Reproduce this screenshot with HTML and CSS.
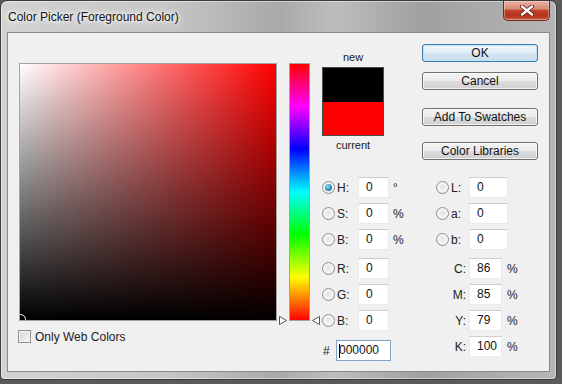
FILE: index.html
```html
<!DOCTYPE html>
<html>
<head>
<meta charset="utf-8">
<link rel="stylesheet" href="styles.css">
</head>
<body>
<div class="window">
  <div class="titlebar">
    <span class="title">Color Picker (Foreground Color)</span>
    <div class="close">
      <svg width="14" height="11" viewBox="0 0 14 11">
        <path d="M2 1.5 L12 9.5 M12 1.5 L2 9.5" stroke="#5a1d12" stroke-width="4" stroke-linecap="round"/>
        <path d="M2 1.5 L12 9.5 M12 1.5 L2 9.5" stroke="#fff" stroke-width="2.4" stroke-linecap="round"/>
      </svg>
    </div>
  </div>
  <div class="client">
    <div class="left">
      <div class="field"><div class="marker"></div></div>
      <div class="webcolors"><span class="checkbox"></span><span>Only Web Colors</span></div>
    </div>
    <div class="slider-col">
      <div class="slider"></div>
      <svg class="tri tri-l" width="9" height="9" viewBox="0 0 9 9"><polygon points="0.5,0.5 7.5,4.5 0.5,8.5" fill="#fff" stroke="#555"/></svg>
      <svg class="tri tri-r" width="9" height="9" viewBox="0 0 9 9"><polygon points="8.5,0.5 1.5,4.5 8.5,8.5" fill="#fff" stroke="#555"/></svg>
    </div>
    <div class="right">
      <div class="top">
        <div class="swatch-col">
          <div class="cap">new</div>
          <div class="swatch"><div class="sw-new"></div><div class="sw-cur"></div></div>
          <div class="cap cap-cur">current</div>
        </div>
        <div class="buttons">
          <div class="btn default">OK</div>
          <div class="btn b-cancel">Cancel</div>
          <div class="btn b-add">Add To Swatches</div>
          <div class="btn b-lib">Color Libraries</div>
        </div>
      </div>
      <div class="fields">
        <div class="colA">
          <div class="group">
            <div class="row"><span class="radio on"></span><span class="lbl">H:</span><span class="inp w31">0</span><span class="unit">°</span></div>
            <div class="row"><span class="radio"></span><span class="lbl">S:</span><span class="inp w31">0</span><span class="unit">%</span></div>
            <div class="row"><span class="radio"></span><span class="lbl">B:</span><span class="inp w31">0</span><span class="unit">%</span></div>
          </div>
          <div class="group g2">
            <div class="row"><span class="radio"></span><span class="lbl">R:</span><span class="inp w31">0</span></div>
            <div class="row"><span class="radio"></span><span class="lbl">G:</span><span class="inp w31">0</span></div>
            <div class="row"><span class="radio"></span><span class="lbl">B:</span><span class="inp w31">0</span></div>
          </div>
          <div class="row hexrow"><span class="hash">#</span><span class="inp hex"><span class="caret"></span>000000</span></div>
        </div>
        <div class="colB">
          <div class="group">
            <div class="row"><span class="radio"></span><span class="lbl lblb">L:</span><span class="inp w39">0</span></div>
            <div class="row"><span class="radio"></span><span class="lbl lblb">a:</span><span class="inp w39">0</span></div>
            <div class="row"><span class="radio"></span><span class="lbl lblb">b:</span><span class="inp w39">0</span></div>
          </div>
          <div class="group g2">
            <div class="row"><span class="clbl">C:</span><span class="inp w33">86</span><span class="unit u2">%</span></div>
            <div class="row"><span class="clbl">M:</span><span class="inp w33">85</span><span class="unit u2">%</span></div>
            <div class="row"><span class="clbl">Y:</span><span class="inp w33">79</span><span class="unit u2">%</span></div>
            <div class="row"><span class="clbl">K:</span><span class="inp w33">100</span><span class="unit u2">%</span></div>
          </div>
        </div>
      </div>
    </div>
  </div>
</div>
</body>
</html>
```
FILE: styles.css
```css
body {
  margin: 0;
  background: #5a5a5a;
  font-family: "Liberation Sans", Arial, sans-serif;
  font-size: 12px;
  color: #000;
}

.window {
  width: 557px;
  height: 380px;
  box-sizing: border-box;
  border: 1px solid #3c3c3c;
  border-radius: 7px 7px 4px 4px;
  background: linear-gradient(90deg, #d2d2d2 0%, #c6c6c6 30%, #a9a9a9 50%, #bdbdbd 60%, #a0a0a0 76%, #b6b6b6 100%);
  box-shadow: inset 0 0 0 1px rgba(255,255,255,0.45);
  padding: 0 6px 7px;
  display: flex;
  flex-direction: column;
}

.titlebar {
  height: 31px;
  margin: 0 -6px;
  padding: 0 6px 0 7px;
  display: flex;
  justify-content: space-between;
  align-items: flex-start;
}

.title {
  margin-top: 9px;
  line-height: 15px;
  font-size: 12px;
  color: #111;
  text-shadow: 0 0 6px #fff, 0 0 10px #fff, 0 0 3px #fff;
}

.close {
  width: 47px;
  height: 20px;
  box-sizing: border-box;
  border: 1px solid #6a2a1e;
  border-top: none;
  border-radius: 0 0 5px 5px;
  background: linear-gradient(#e9b0a2 0%, #d98a74 42%, #c2412a 50%, #b5321d 80%, #cc6048 100%);
  box-shadow: inset 0 0 0 1px rgba(255,255,255,0.35);
  display: flex;
  align-items: center;
  justify-content: center;
}

.client {
  flex: 1;
  box-sizing: border-box;
  border: 1px solid #8a8a8a;
  background: #f0f0f0;
  display: flex;
}

.left {
  padding: 30px 0 0 11px;
  width: 258px;
}

.field {
  position: relative;
  width: 258px;
  height: 258px;
  box-sizing: border-box;
  border: 1px solid #a3a3a3;
  overflow: hidden;
  background: linear-gradient(to top, #000, rgba(0,0,0,0)), linear-gradient(to right, #fff, #f00);
}

.marker {
  position: absolute;
  left: -5px;
  bottom: -5px;
  width: 9px;
  height: 9px;
  border: 1px solid #fff;
  border-radius: 50%;
}

.webcolors {
  margin: 9px 0 0 -1px;
  display: flex;
  align-items: center;
  height: 13px;
  color: #222;
}

.checkbox {
  width: 13px;
  height: 13px;
  box-sizing: border-box;
  border: 1px solid #8e8f8f;
  background: linear-gradient(135deg, #d6d6d6, #f6f6f6);
  box-shadow: inset 0 0 0 1px #f4f4f4;
  margin-right: 4px;
}

.slider-col {
  position: relative;
  margin-left: 12px;
  padding-top: 30px;
}

.slider {
  width: 21px;
  height: 258px;
  box-sizing: border-box;
  border: 1px solid #a3a3a3;
  background: linear-gradient(to bottom, #f00 0%, #f0f 16.67%, #00f 33.33%, #0ff 50%, #0f0 66.67%, #ff0 83.33%, #f00 100%);
}

.tri {
  position: absolute;
  top: 283px;
  display: block;
}
.tri-l { left: -10px; }
.tri-r { left: 22px; }

.right {
  margin-left: 12px;
  display: flex;
  flex-direction: column;
}

.top {
  height: 144px;
  display: flex;
}

.swatch-col {
  width: 100px;
  padding-top: 17px;
}

.cap {
  width: 62px;
  text-align: center;
  line-height: 14px;
  font-size: 11px;
  color: #222;
}

.swatch {
  margin-top: 3px;
  width: 62px;
  height: 69px;
  box-sizing: border-box;
  border: 1px solid #4a4a4a;
  display: flex;
  flex-direction: column;
}
.sw-new { height: 34px; background: #000; }
.sw-cur { flex: 1; background: #f00; }
.cap-cur { margin-top: 2px; }

.buttons {
  padding-top: 11px;
  display: flex;
  flex-direction: column;
}

.btn {
  width: 116px;
  height: 18px;
  box-sizing: border-box;
  border: 1px solid #707070;
  border-radius: 3px;
  background: linear-gradient(#f3f3f3 0%, #ebebeb 48%, #dcdcdc 52%, #d0d0d0 100%);
  box-shadow: inset 0 0 0 1px rgba(255,255,255,0.7);
  text-align: center;
  line-height: 16px;
  font-size: 12px;
  color: #111;
}
.btn.default {
  border-color: #3c7fb1;
  background: linear-gradient(#eef5fa 0%, #e3eef6 48%, #d5e5f1 52%, #cbdeec 100%);
  box-shadow: inset 0 0 0 1px #bfe2f6;
}
.b-cancel { margin-top: 10px; }
.b-add { margin-top: 18px; }
.b-lib { margin-top: 16px; }

.fields {
  display: flex;
}

.colA { width: 100px; }
.colB { padding-left: 14px; }

.group {
  display: flex;
  flex-direction: column;
  gap: 5px;
}
.g2 { margin-top: 8px; }

.row {
  display: flex;
  align-items: center;
  height: 21px;
  color: #222;
}

.radio {
  position: relative;
  width: 13px;
  height: 13px;
  box-sizing: border-box;
  border-radius: 50%;
  border: 1px solid #8e8f8f;
  background: radial-gradient(circle at 50% 45%, #e2e2e2 0%, #f6f6f6 55%, #d8d8d8 100%);
}
.radio.on::after {
  content: "";
  position: absolute;
  left: 2px;
  top: 2px;
  width: 7px;
  height: 7px;
  border-radius: 50%;
  background: radial-gradient(circle at 40% 35%, #a6e0f7 0%, #3b9cc6 45%, #115a80 100%);
}

.lbl {
  width: 23px;
  box-sizing: border-box;
  padding-left: 2px;
}
.lblb { width: 20px; }

.clbl {
  width: 33px;
  box-sizing: border-box;
  padding-right: 3px;
  text-align: right;
}

.inp {
  height: 21px;
  box-sizing: border-box;
  background: #fff;
  border: 1px solid #eaeaea;
  border-top-color: #cdcdcd;
  padding-left: 7px;
  line-height: 19px;
  font-size: 12px;
  color: #111;
}
.w31 { width: 31px; }
.w39 { width: 39px; }
.w33 { width: 33px; }

.unit { margin-left: 4px; }
.u2 { margin-left: 5px; }

.hexrow { margin-top: 9px; }
.hash { width: 13px; padding-left: 1px; box-sizing: border-box; }
.hex {
  margin-left: 1px;
  width: 55px;
  border: 1px solid #7fa4c6;
  padding-left: 2px;
  display: flex;
  align-items: center;
}
.caret {
  width: 1px;
  height: 14px;
  background: #000;
  margin-right: -1px;
}
```
